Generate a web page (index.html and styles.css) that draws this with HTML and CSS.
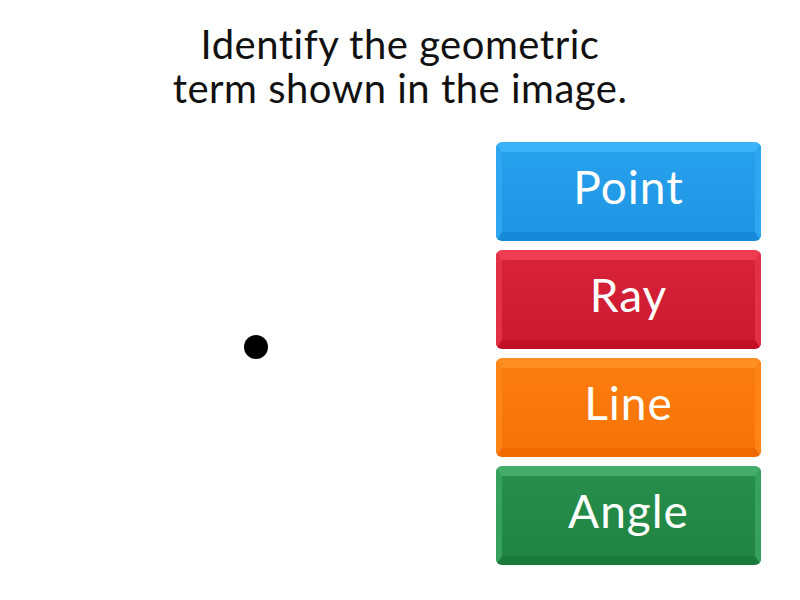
FILE: index.html
```html
<!DOCTYPE html>
<html>
<head>
<meta charset="utf-8">
<link rel="stylesheet" href="styles.css">
</head>
<body>
<div class="page">
  <h1 class="question">Identify the geometric<br>term shown in the image.</h1>
  <div class="main">
    <div class="figure">
      <div class="dot"></div>
    </div>
    <div class="answers">
      <div class="answer blue">Point</div>
      <div class="answer red">Ray</div>
      <div class="answer orange">Line</div>
      <div class="answer green">Angle</div>
    </div>
  </div>
</div>
</body>
</html>
```
FILE: styles.css
```css
html, body {
  margin: 0;
  padding: 0;
  background: #ffffff;
}
.page {
  width: 800px;
  height: 600px;
  font-family: Lato, "Open Sans", sans-serif;
  font-variant-ligatures: none;
  color: #111;
}
.question {
  margin: 0;
  padding-top: 22px;
  font-size: 40px;
  font-weight: 400;
  line-height: 44px;
  letter-spacing: 0.5px;
  text-align: center;
}
.main {
  display: flex;
  margin-top: 32px;
}
.figure {
  width: 496px;
  display: flex;
  align-items: flex-start;
  justify-content: flex-start;
}
.dot {
  width: 24px;
  height: 24px;
  border-radius: 50%;
  background: #000;
  margin-left: 244px;
  margin-top: 193px;
}
.answers {
  width: 265px;
  display: flex;
  flex-direction: column;
  gap: 9px;
}
.answer {
  box-sizing: border-box;
  height: 99px;
  border-radius: 6px;
  border-style: solid;
  border-width: 10px 6px 9px 6px;
  display: flex;
  align-items: center;
  justify-content: center;
  color: #fff;
  font-size: 46px;
  font-weight: 400;
  letter-spacing: 1px;
  padding-bottom: 12px;
}
.blue {
  background: linear-gradient(#27a0ec, #1f96e4);
  border-color: #3cb3f8 #2ea6f0 #168ad8 #2ea6f0;
}
.red {
  background: linear-gradient(#d72239, #cc1a30);
  border-color: #ee3d52 #e23046 #c20f26 #e23046;
}
.orange {
  background: linear-gradient(#fb7c0e, #f77408);
  border-color: #ff8e22 #ff8418 #f06800 #ff8418;
}
.green {
  background: linear-gradient(#268d4a, #218543);
  border-color: #45ad6c #36a05d #197a3a #36a05d;
}
```
